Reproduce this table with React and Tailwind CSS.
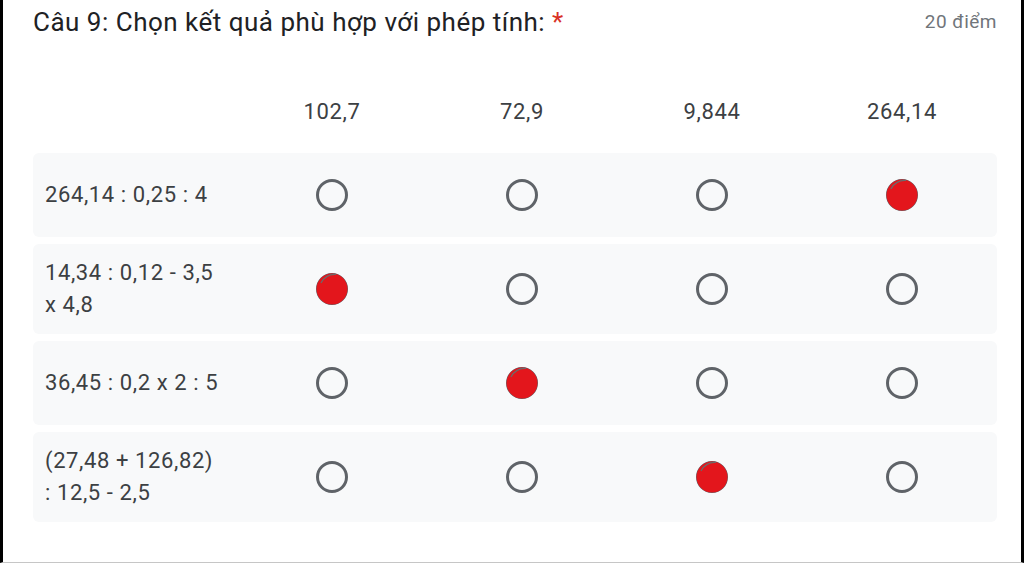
import React from "react"

const columns = ["102,7", "72,9", "9,844", "264,14"]

const rows = [
  { label: "264,14 : 0,25 : 4", picked: 3 },
  { label: "14,34 : 0,12 - 3,5 x 4,8", picked: 0 },
  { label: "36,45 : 0,2 x 2 : 5", picked: 1 },
  { label: "(27,48 + 126,82) : 12,5 - 2,5", picked: 2 },
]

function Radio({ checked }) {
  return (
    <svg width="36" height="36" viewBox="0 0 36 36">
      <circle cx="18" cy="18" r="14.5" fill="none" stroke="#5f6368" strokeWidth="3" />
      {checked && (
        <>
          <circle cx="18" cy="18" r="15.5" fill="#e3161c" />
          <path d="M7 12 A15 15 0 0 1 22 3.5" fill="none" stroke="#6b6b6b" strokeWidth="1.2" />
        </>
      )}
    </svg>
  )
}

export default function App() {
  return (
    <div
      className="h-[563px] w-full bg-white border-l-[3px] border-r-[3px] border-b border-l-black border-r-black border-b-[#c6c6c6] pl-[30px] pr-[24px] pt-[4px]"
      style={{ fontFamily: "Roboto, 'Liberation Sans', sans-serif" }}
    >
      <div className="flex items-center justify-between leading-[36px]">
        <div className="text-[26px] tracking-[0.5px] text-[#202124]">
          Câu 9: Chọn kết quả phù hợp với phép tính: <span className="text-[#d93025]">*</span>
        </div>
        <div className="text-[19px] tracking-[0.5px] text-[#70757a]">20 điểm</div>
      </div>

      <div className="mt-[47px] flex h-[48px] items-center text-[22px] tracking-[0.6px] text-[#3c4043]">
        <div className="w-[204px]" />
        {columns.map((c) => (
          <div key={c} className="w-[190px] text-center">
            {c}
          </div>
        ))}
      </div>

      <div className="mt-[18px] flex flex-col gap-[7px]">
        {rows.map((r) => (
          <div
            key={r.label}
            className="flex min-h-[84px] items-center rounded-[6px] bg-[#f8f9fa] py-[13px]"
          >
            <div className="w-[204px] pl-3 pr-[18px] text-[22px] leading-[32px] tracking-[0.6px] text-[#3c4043]">
              {r.label}
            </div>
            {columns.map((c, i) => (
              <div key={c} className="flex w-[190px] justify-center">
                <Radio checked={i === r.picked} />
              </div>
            ))}
          </div>
        ))}
      </div>
    </div>
  )
}
